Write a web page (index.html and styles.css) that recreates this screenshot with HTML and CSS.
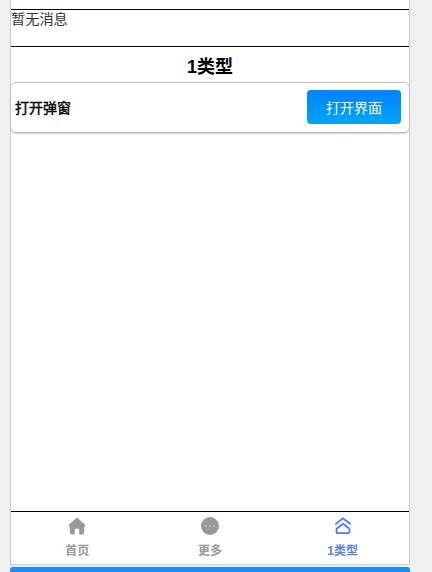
FILE: index.html
```html
<!DOCTYPE html>
<html>
<head>
	<title>1类型</title>
	<link rel="stylesheet" href="styles.css">
</head>
<body>
<div id="phone">
	<div id="notice">暂无消息</div>
	<h1 id="title">1类型</h1>
	<div class="row">
		<span class="row_label">打开弹窗</span>
		<button class="open_btn">打开界面</button>
	</div>
	<div id="spacer"></div>
	<div id="tabbar">
		<div class="tab">
			<svg class="tab_icon" viewBox="0 0 20 20"><path fill="#999" d="M10 .5 L19 8.500 Q19.500 10.500 18 10.500 L18 17 Q18 19.500 15.500 19.500 L12.500 19.500 L12.500 14 Q10 11.500 7.500 14 L7.500 19.500 L4.500 19.500 Q2 19.500 2 17 L2 10.500 Q.5 10.500 1 8.500 Z"/></svg>
			<span>首页</span>
		</div>
		<div class="tab">
			<svg class="tab_icon" viewBox="0 0 20 20"><circle cx="10" cy="10" r="10" fill="#999"/><circle cx="5.500" cy="10" r="1" fill="#c4c4c4"/><circle cx="10" cy="10" r="1" fill="#c4c4c4"/><circle cx="14.500" cy="10" r="1" fill="#c4c4c4"/></svg>
			<span>更多</span>
		</div>
		<div class="tab active">
			<svg class="tab_icon" viewBox="0 0 20 20"><path fill="none" stroke="#4a80e4" stroke-width="2" d="M1.500 8 L10 1.500 L18.500 8"/><path fill="none" stroke="#4a80e4" stroke-width="2" stroke-linejoin="round" d="M10 7.500 L17 13 Q18 15.500 16.500 18 L3.500 18 Q2 15.500 3 13 Z"/></svg>
			<span>1类型</span>
		</div>
	</div>
</div>
<div id="bottom_strip"></div>
</body>
</html>
```

FILE: styles.css
```css
body{
	margin: 0;
	background: #f0f0f0;
	font-family: "Liberation Sans", "Noto Sans CJK SC", sans-serif;
	height: 572px;
	overflow: hidden;
}

#phone{
	width: 398px;
	height: 555px;
	margin-left: 10px;
	padding-top: 9px;
	background: white;
	border: 1px solid #ccc;
	border-top: none;
	display: flex;
	flex-direction: column;
}

#notice{
	height: 36px;
	border-top: 1px solid black;
	border-bottom: 1px solid black;
	font-size: 14.200px;
	line-height: 19px;
	color: #333;
}

#title{
	margin: 0;
	height: 35px;
	line-height: 40px;
	font-size: 18px;
	text-align: center;
	color: black;
}

.row{
	height: 49px;
	margin: 0 -1px;
	border: 1px solid #b8c4c4;
	border-radius: 6px;
	box-shadow: 0 1px 1px #ccd4d4;
	display: flex;
	align-items: center;
	justify-content: space-between;
	padding: 0 8px 0 4px;
}

.row_label{
	font-size: 14px;
	margin-bottom: 1px;
	color: black;
	-webkit-text-stroke: 0.4px black;
}

.open_btn{
	width: 94px;
	height: 34px;
	margin-bottom: 1px;
	border: none;
	border-radius: 4px;
	background: linear-gradient(#0081ff, #00a6fb);
	color: white;
	font-family: inherit;
	font-size: 14px;
}

#spacer{
	flex: 1;
}

#tabbar{
	height: 52px;
	border-top: 1px solid black;
	display: flex;
}

.tab{
	flex: 1;
	display: flex;
	flex-direction: column;
	align-items: center;
	font-size: 12px;
	font-weight: bold;
	color: #999;
	padding-top: 5px;
}

.tab_icon{
	width: 18px;
	height: 18px;
	margin-bottom: 9px;
}

.tab span{
	line-height: 15px;
}

.active{
	color: #5f82dc;
}

#bottom_strip{
	width: 400px;
	height: 10px;
	margin: 2px 0 0 10px;
	background: #1e8cf0;
	border-radius: 3px 3px 0 0;
}
```
